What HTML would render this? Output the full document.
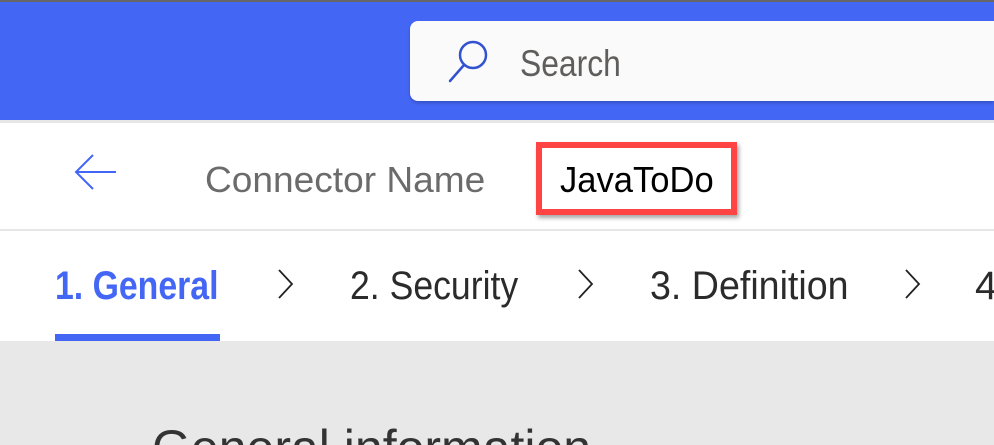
<!DOCTYPE html>
<html style="overflow:hidden"><head><style>
html,body{margin:0;width:994px;height:445px;overflow:hidden}
body{position:relative;background:#fff;font-family:"Liberation Sans",sans-serif}
.a{position:absolute;white-space:nowrap;transform-origin:left top}
</style></head><body>
<div class="a" style="left:0;top:0;width:994px;height:2px;background:#666"></div>
<div class="a" style="left:0;top:2px;width:994px;height:118px;background:#4466f5"></div>
<div class="a" style="left:0;top:120px;width:994px;height:3px;background:#e6e6e6"></div>
<div class="a" style="left:410px;top:21px;width:584px;height:80px;background:#fafafa;border-radius:8px 0 0 8px;box-shadow:0 2px 3px rgba(0,0,0,.2)"></div>
<svg class="a" style="left:440px;top:38px" width="60" height="50"><circle cx="33" cy="17" r="13" fill="none" stroke="#3352d0" stroke-width="2.5"/><line x1="24" y1="27" x2="10" y2="43" stroke="#3352d0" stroke-width="2.5" stroke-linecap="round"/></svg>
<div class="a" style="left:520px;top:44px;font-size:37px;line-height:40px;color:#605e5c;transform:scaleX(.86)">Search</div>
<svg class="a" style="left:70px;top:150px" width="50" height="45"><path d="M23 5 L6 22 L23 39 M6 22 H46" fill="none" stroke="#4466f5" stroke-width="2"/></svg>
<div class="a" style="left:205px;top:160px;font-size:36px;line-height:40px;color:#6b6b6b;transform:scaleX(1.03)">Connector Name</div>
<div class="a" style="left:536px;top:142px;width:189px;height:61px;border:6px solid #ff4444;box-shadow:2px 3px 4px rgba(0,0,0,.35)"></div>
<div class="a" style="left:560px;top:160px;font-size:36px;line-height:40px;color:#000;transform:scaleX(.96)">JavaToDo</div>
<div class="a" style="left:0;top:229px;width:994px;height:2px;background:#e6e6e6"></div>
<div class="a" style="left:55px;top:264px;font-size:40px;line-height:44px;color:#4466f5;font-weight:bold;transform:scaleX(.845)">1. General</div>
<div class="a" style="left:350px;top:264px;font-size:40px;line-height:44px;color:#2b2b2b;transform:scaleX(.89)">2. Security</div>
<div class="a" style="left:650px;top:264px;font-size:40px;line-height:44px;color:#2b2b2b;transform:scaleX(.94)">3. Definition</div>
<div class="a" style="left:975px;top:264px;font-size:40px;line-height:44px;color:#2b2b2b">4</div>
<svg class="a" style="left:276px;top:268px" width="20" height="34"><path d="M3 2 L16 16 L3 30" fill="none" stroke="#222" stroke-width="1.8"/></svg>
<svg class="a" style="left:576px;top:268px" width="20" height="34"><path d="M3 2 L16 16 L3 30" fill="none" stroke="#222" stroke-width="1.8"/></svg>
<svg class="a" style="left:903px;top:268px" width="20" height="34"><path d="M3 2 L16 16 L3 30" fill="none" stroke="#222" stroke-width="1.8"/></svg>
<div class="a" style="left:55px;top:334px;width:165px;height:7px;background:#4466f5"></div>
<div class="a" style="left:0;top:341px;width:994px;height:104px;background:#e8e8e8;overflow:hidden">
<div class="a" style="left:152px;top:79px;height:25px;overflow:hidden;font-size:50px;line-height:56px;color:#333">General information</div>
</div>
</body></html>
